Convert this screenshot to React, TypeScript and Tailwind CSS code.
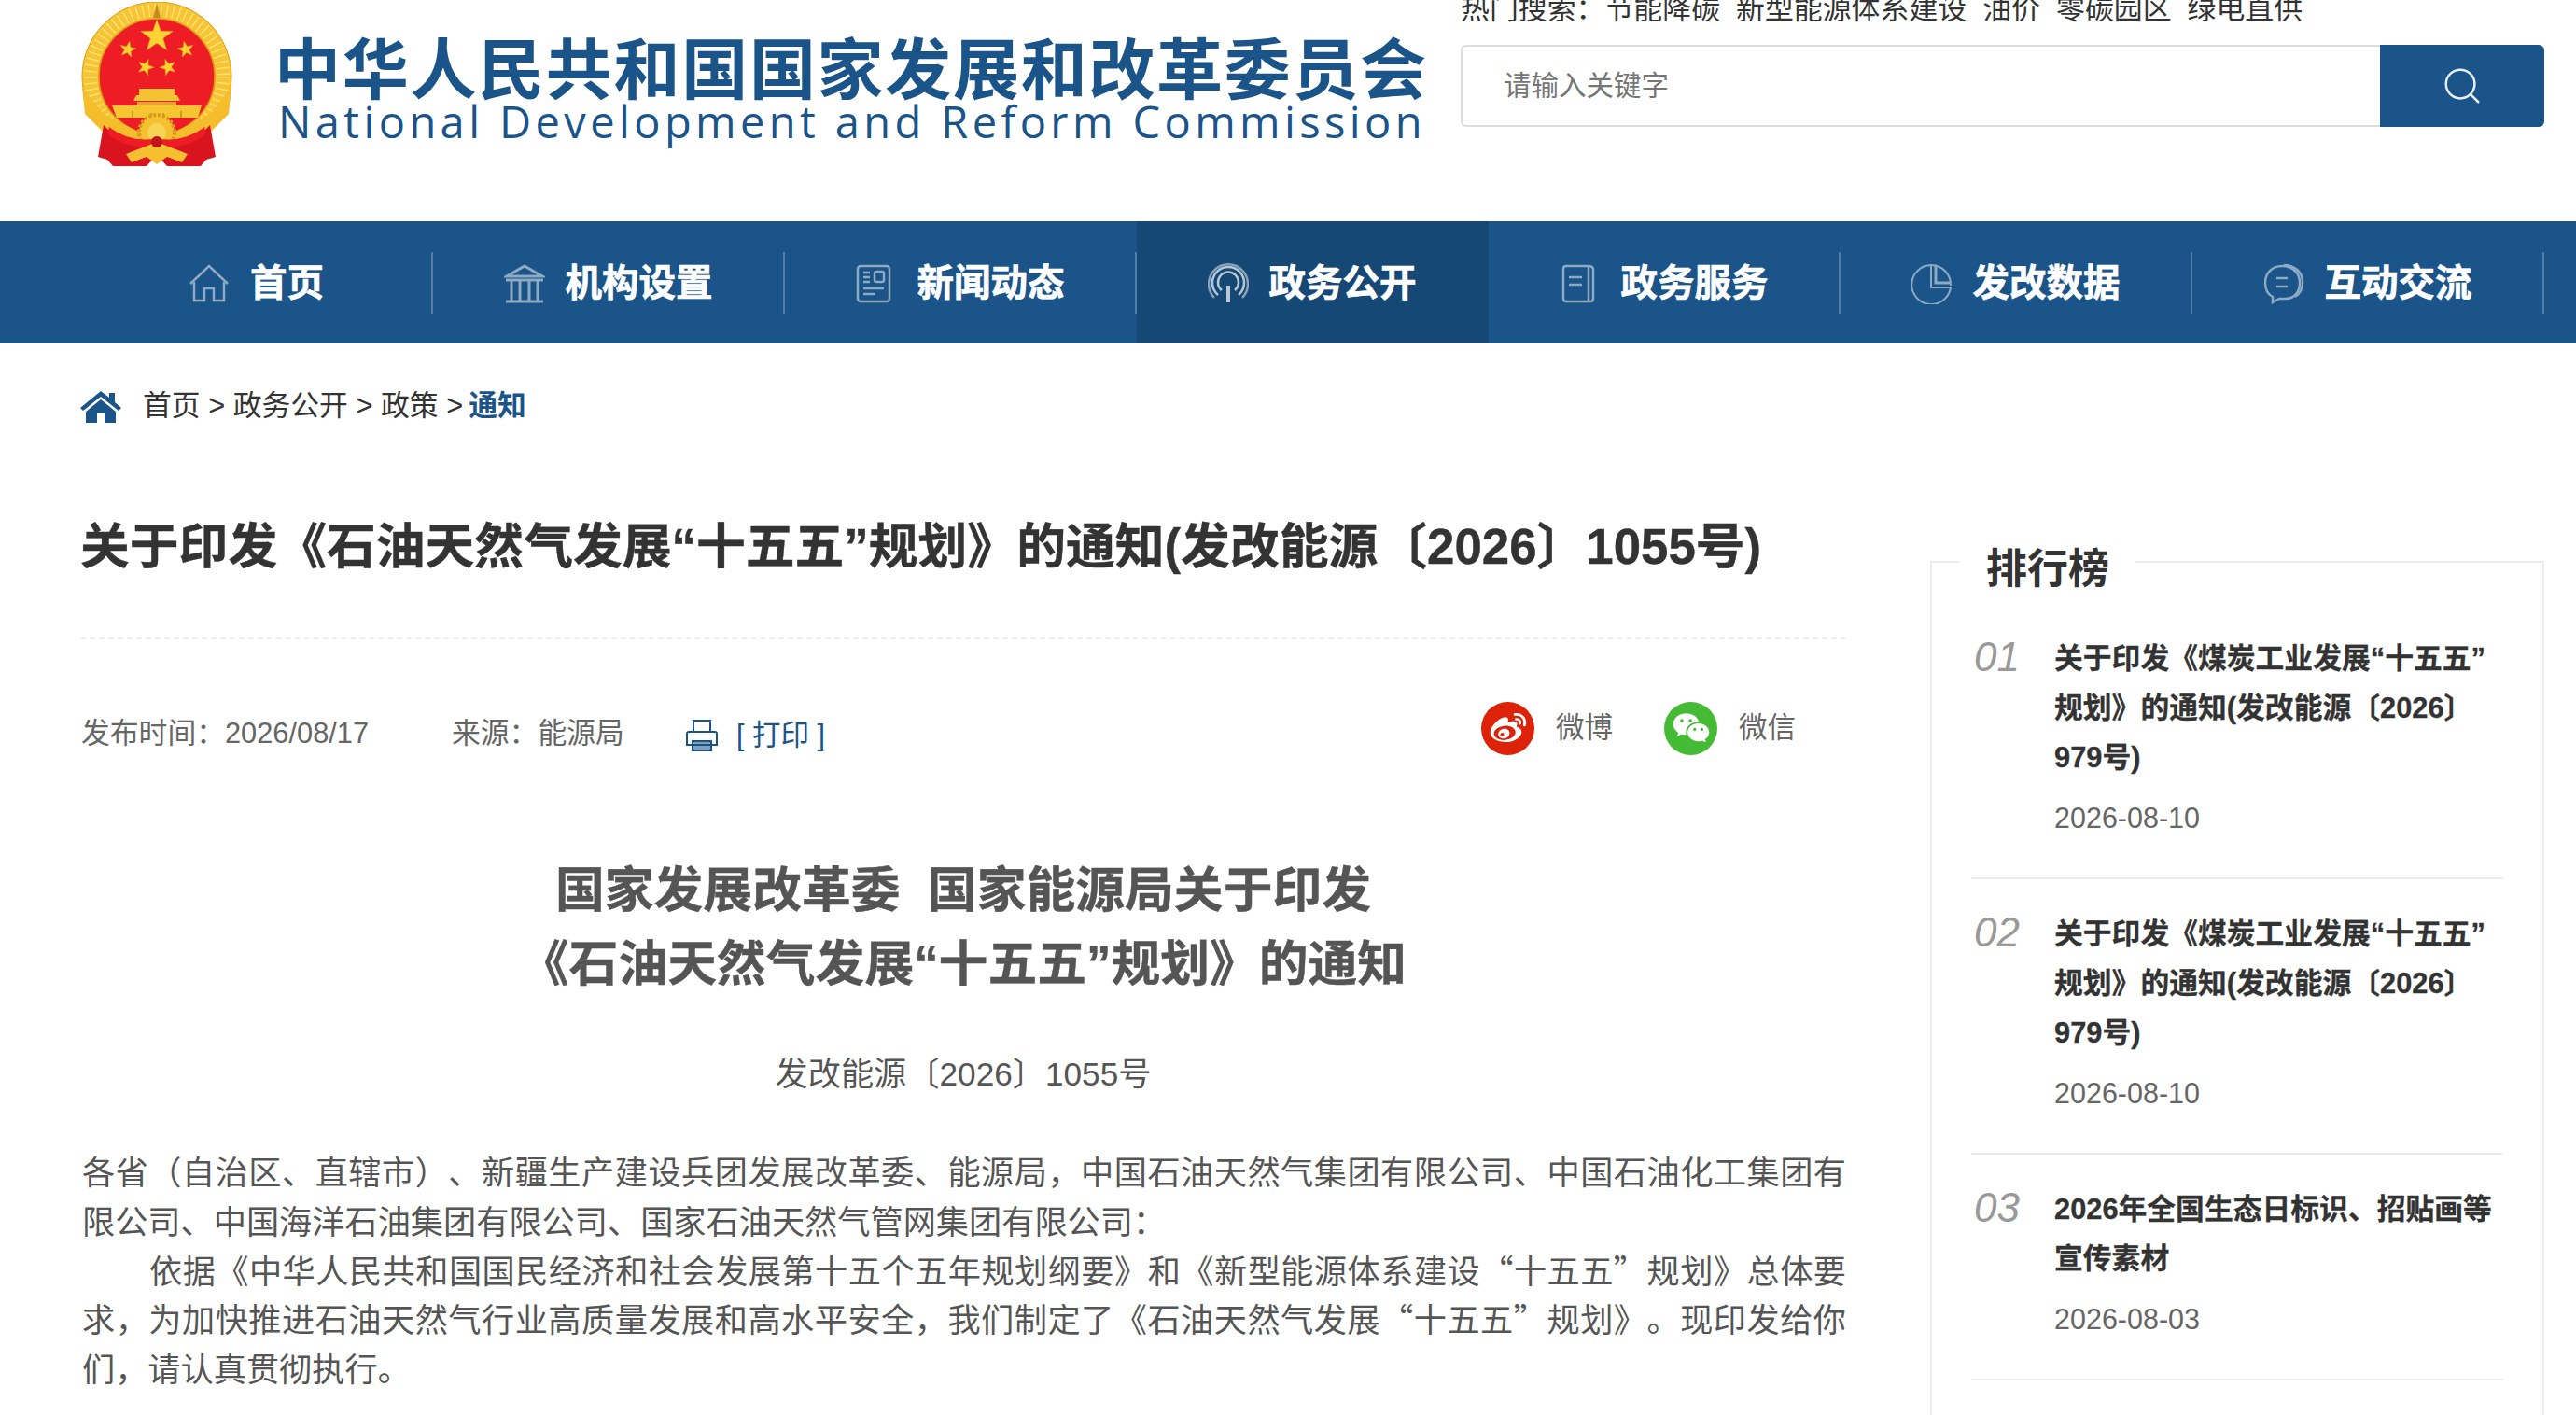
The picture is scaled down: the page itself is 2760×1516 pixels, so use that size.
import { Search } from "lucide-react";
import type { ReactNode } from "react";
import { RiWechatFill, RiWeiboFill } from "react-icons/ri";

const starPoints = (cx: number, cy: number, r: number, rot = 0) => {
  const pts: string[] = [];
  for (let i = 0; i < 10; i++) {
    const rad = i % 2 === 0 ? r : r * 0.4;
    const a = ((-90 + rot + i * 36) * Math.PI) / 180;
    pts.push(`${(cx + rad * Math.cos(a)).toFixed(1)},${(cy + rad * Math.sin(a)).toFixed(1)}`);
  }
  return pts.join(" ");
};

function Emblem() {
  const stars: [number, number, number, number][] = [
    [81, 37, 18, 0],
    [50, 51, 9, 12],
    [112, 51, 9, -12],
    [69, 70, 9, 20],
    [93, 70, 9, -20],
  ];
  return (
    <svg width="162" height="176" viewBox="0 0 162 176" className="shrink-0">
      <circle cx="81" cy="80" r="80" fill="#f7c531" stroke="#dd9b1c" strokeWidth="1" />
      <circle cx="81" cy="80" r="71" fill="none" stroke="#fde07a" strokeWidth="14" strokeDasharray="1.5 5" />
      <path d="M81 2 L77 17 H85 Z" fill="#c48a1c" />
      <circle cx="81" cy="80" r="62" fill="#ee1c25" stroke="#d9961d" strokeWidth="1.5" />
      {stars.map(([x, y, r, rot]) => (
        <polygon key={`${x}-${y}`} points={starPoints(x, y, r, rot)} fill="#fbd234" stroke="#e0a020" strokeWidth="0.6" />
      ))}
      <path d="M56 106 H106 L103 100 H100 V93 H62 V100 H59 Z" fill="#f4c233" />
      <path d="M60 107 H102 V111 H60 Z" fill="#e4a72a" />
      <path d="M33 111 H129 L125 124 H38 Z" fill="#f6c632" />
      <path d="M55 124 V117 M75 124 V119 M88 124 V119 M107 124 V117" stroke="#c98b1d" strokeWidth="1.5" />
      <path d="M1 92 L24 120 L62 140 H100 L138 120 L161 92 L158 120 L132 146 L100 162 H62 L30 146 L4 120 Z" fill="#f5bd2c" />
      <circle cx="81" cy="140" r="19" fill="#f4c030" stroke="#d79a20" strokeWidth="4" strokeDasharray="3 2" />
      <circle cx="81" cy="140" r="10" fill="#f8d454" />
      <path d="M24 132 C40 150 62 156 81 150 C100 156 122 150 138 132 L144 166 L134 169 L128 176 H92 L81 164 L70 176 H34 L28 169 L18 166 Z" fill="#d8141f" />
      <path d="M30 134 C46 146 64 150 81 146 C98 150 116 146 132 134 L134 141 C116 155 98 158 81 152 C64 158 46 155 28 141 Z" fill="#ee1c25" />
      <path d="M48 163 L81 150 L114 163 L108 172 L92 166 L81 174 L70 166 L54 172 Z" fill="#f4c030" />
      <circle cx="81" cy="150" r="6" fill="#c3141d" />
    </svg>
  );
}

const iconCls = "h-[44px] w-[44px] shrink-0 fill-none stroke-white";

const navItems: { label: string; active?: boolean; icon: ReactNode }[] = [
  {
    label: "首页",
    icon: (
      <svg viewBox="0 0 44 44" className={`${iconCls} opacity-50`} strokeWidth="2.5">
        <path d="M2 22 L22 3 L42 22 M6 20 V40 H17 V27 H27 V40 H38 V20" />
      </svg>
    ),
  },
  {
    label: "机构设置",
    icon: (
      <svg viewBox="0 0 44 44" className={`${iconCls} opacity-50`} strokeWidth="3">
        <path d="M22 3 L41 14 H3 Z" />
        <path d="M2 18 H42 M2 41 H42 M8 18 V40 M17 18 V40 M27 18 V40 M36 18 V40" />
      </svg>
    ),
  },
  {
    label: "新闻动态",
    icon: (
      <svg viewBox="0 0 44 44" className={`${iconCls} -translate-x-[3px] opacity-50`} strokeWidth="2.5">
        <rect x="5" y="3" width="34" height="38" rx="3" />
        <rect x="23" y="9" width="10" height="11" rx="2" />
        <path d="M11 10 H18 M11 15 H18 M11 20 H18 M11 27 H33 M11 33 H24" />
      </svg>
    ),
  },
  {
    label: "政务公开",
    active: true,
    icon: (
      <svg viewBox="0 0 44 44" className={`${iconCls} opacity-70`} strokeWidth="2.5">
        <path d="M22 24 V42" strokeWidth="4" />
        <path d="M15 29 A11 11 0 1 1 29 29" />
        <path d="M11 34 A17 17 0 1 1 33 34" />
        <path d="M7 37 A21 21 0 1 1 37 37" opacity="0.7" />
      </svg>
    ),
  },
  {
    label: "政务服务",
    icon: (
      <svg viewBox="0 0 44 44" className={`${iconCls} -translate-x-[2px] opacity-50`} strokeWidth="2.5">
        <path d="M6 6 Q6 3 9 3 H33 Q38 3 38 7 V38 Q38 41 35 41 H9 Q6 41 6 38 Z" />
        <path d="M33 3 V41 M12 15 H26 M12 23 H26" />
      </svg>
    ),
  },
  {
    label: "发改数据",
    icon: (
      <svg viewBox="0 0 44 44" className={`${iconCls} opacity-50`} strokeWidth="2">
        <path d="M21 2 A21 21 0 1 0 42 26 H21 Z" />
        <path d="M21 2 A21 21 0 0 1 42 24" />
        <path d="M26 2 V21 H42" strokeWidth="3" />
      </svg>
    ),
  },
  {
    label: "互动交流",
    icon: (
      <svg viewBox="0 0 44 44" className={`${iconCls} opacity-50`} strokeWidth="2.5">
        <path d="M20 3 C8 3 2 12 2 21 C2 29 6 34 10 36 L10 42 L17 38 H24 C34 38 39 30 39 21 C39 11 32 3 20 3 Z" />
        <path d="M22 2 C34 2 42 10 42 20 C42 28 39 33 34 36" />
        <path d="M14 16 H26 M14 25 H26" />
      </svg>
    ),
  },
];

const hotWords = ["节能降碳", "新型能源体系建设", "油价", "零碳园区", "绿电直供"];

const rankItems = [
  { no: "01", title: "关于印发《煤炭工业发展“十五五”\u200b规划》的通知(发改能源〔2026〕979号)", date: "2026-08-10" },
  { no: "02", title: "关于印发《煤炭工业发展“十五五”\u200b规划》的通知(发改能源〔2026〕979号)", date: "2026-08-10" },
  { no: "03", title: "2026年全国生态日标识、招贴画等宣传素材", date: "2026-08-03" },
];

export default function App() {
  return (
    <div className="h-[1516px] w-[2760px] overflow-hidden bg-white font-['Liberation_Sans','Noto_Sans_CJK_SC',sans-serif] text-[#333]">
      <header className="flex h-[237px] overflow-hidden pl-[87px] pr-[33px]">
        <div className="mt-[2px]">
          <Emblem />
        </div>
        <div className="ml-[45px] mt-[35px] w-[1252px] text-[#1a5488]">
          <div className="h-[71px] whitespace-nowrap text-[71px] font-bold leading-[68px] tracking-[1.7px] font-['Noto_Sans_CJK_SC',sans-serif]">
            中华人民共和国国家发展和改革委员会
          </div>
          <div className="whitespace-nowrap pl-[4px] text-[47px] leading-[48px] tracking-[4.4px] font-['Open_Sans',sans-serif]">
            National Development and Reform Commission
          </div>
        </div>
        <div className="ml-[19px] w-[1161px]">
          <div className="-mt-[6px] flex h-[31px] whitespace-nowrap text-[30.9px] leading-[31px] text-[#333]">
            <span>热门搜索：</span>
            {hotWords.map((w, i) => (
              <span key={w} className={i === 0 ? "" : "ml-[17px]"}>
                {w}
              </span>
            ))}
          </div>
          <div className="mt-[23px] flex h-[88px]">
            <div className="flex flex-1 items-center rounded-l-[6px] border-2 border-r-0 border-[#dddddd] pl-[44px] text-[29.5px] text-[#757575]">
              请输入关键字
            </div>
            <div className="flex w-[176px] items-center justify-center rounded-r-[6px] bg-[#1a5488]">
              <Search size={46} strokeWidth={1.3} className="text-[#e6edf3]" />
            </div>
          </div>
        </div>
      </header>

      <nav className="flex h-[131px] bg-[#1a5488] pl-[87px]">
        {navItems.map((item) => (
          <div key={item.label} className={`flex h-full w-[377px] items-center ${item.active ? "bg-[#164876]" : ""}`}>
            <div className="mt-[3px] flex flex-1 items-center justify-center gap-[22px]">
              {item.icon}
              <span className="text-[39.5px] font-bold leading-none text-white [-webkit-text-stroke:0.7px_white]">{item.label}</span>
            </div>
            {item.active ? <div className="h-[66px] w-[2px]" /> : <div className="h-[66px] w-[2px] bg-white/25" />}
          </div>
        ))}
      </nav>

      <div className="flex h-[134px] items-center pl-[86px] text-[30.8px]">
        <svg viewBox="0 0 44 36" className="mr-[23px] h-[36px] w-[44px] fill-[#1a5488]">
          <path d="M22 2 L31 9 V4 H37 V14 L44 20 L41 23 L22 8 L3 23 L0 20 Z" />
          <path d="M22 11 L38 24 V36 H26 V26 H18 V36 H6 V24 Z" />
        </svg>
        <span>首页 &gt; 政务公开 &gt; 政策 &gt; </span>
        <span className="ml-[6px] font-bold text-[#1a5488]">通知</span>
      </div>

      <div className="flex pl-[86px]">
        <main className="w-[1892px]">
          <h1 className="h-[183px] whitespace-nowrap border-b-2 border-dashed border-[#eeeeee] pt-[34px] text-[52.8px] font-bold leading-[100px] text-[#333] [-webkit-text-stroke:0.4px_#333]">
            关于印发《石油天然气发展“十五五”规划》的通知(发改能源〔2026〕1055号)
          </h1>

          <div className="flex h-[200px] items-center pl-[1px] pr-[54px] text-[30.8px] text-[#666]">
            <span className="mt-[2px] w-[397px]">发布时间：2026/08/17</span>
            <span className="mt-[2px] w-[249px]">来源：能源局</span>
            <span className="ml-[1px] mt-[6px] flex items-center gap-[19px] text-[30.5px] text-[#1a5488]">
              <svg viewBox="0 0 36 36" className="h-[36px] w-[36px] fill-none stroke-[#1a5488]" strokeWidth="2">
                <path d="M9 14 V2 H27 V14" />
                <path d="M4 14 H32 Q34 14 34 16 V28 H2 V16 Q2 14 4 14 Z" />
                <path d="M8 24 H28 V34 H8 Z" fill="#1a5488" fillOpacity="0.55" />
              </svg>
              <span>[ 打印 ]</span>
            </span>
            <div className="-mt-[10px] ml-auto flex items-center text-[30.5px]">
              <span className="flex h-[57px] w-[57px] items-center justify-center rounded-full bg-[#dc2208]">
                <RiWeiboFill size={42} className="text-white" />
              </span>
              <span className="ml-[23px]">微博</span>
              <span className="ml-[55px] flex h-[57px] w-[57px] items-center justify-center rounded-full bg-[#45bb35]">
                <RiWechatFill size={42} className="text-white" />
              </span>
              <span className="ml-[23px]">微信</span>
            </div>
          </div>

          <h2 className="mt-[29px] text-center text-[52.8px] font-bold leading-[79px] text-[#555] [-webkit-text-stroke:0.4px_#555]">
            <div>国家发展改革委&nbsp;&nbsp;国家能源局关于印发</div>
            <div>《石油天然气发展“十五五”规划》的通知</div>
          </h2>
          <div className="mt-[52px] text-center text-[35.2px] leading-[53px] text-[#555]">发改能源〔2026〕1055号</div>

          <div className="mt-[51px] pl-[2px] text-justify text-[35.2px] leading-[52.8px] text-[#555] [text-spacing-trim:space-all] font-['Noto_Sans_CJK_SC',serif]">
            <p>各省（自治区、直辖市）、新疆生产建设兵团发展改革委、能源局，中国石油天然气集团有限公司、中国石油化工集团有限公司、中国海洋石油集团有限公司、国家石油天然气管网集团有限公司：</p>
            <p className="indent-[72px]">依据《中华人民共和国国民经济和社会发展第十五个五年规划纲要》和《新型能源体系建设“十五五”规划》总体要求，为加快推进石油天然气行业高质量发展和高水平安全，我们制定了《石油天然气发展“十五五”规划》。现印发给你们，请认真贯彻执行。</p>
          </div>
        </main>

        <aside className="ml-[90px] mt-[99px] h-[1000px] w-[658px] border-2 border-[#ebebf0]">
          <div className="-mt-[23px] ml-[30px] w-fit bg-white px-[28px] text-[44px] font-bold leading-[60px] text-[#333]">排行榜</div>
          <ul className="mt-[7px] px-[42px]">
            {rankItems.map((item) => (
              <li key={item.no} className="flex border-b-2 border-[#ebebf0] pb-[44px] pt-[32px]">
                <span className="w-[89px] shrink-0 pl-[3px] text-[44px] italic leading-[49px] text-[#999]">{item.no}</span>
                <div className="min-w-0 flex-1">
                  <div className="text-[30.8px] font-bold leading-[53px] text-[#333] [-webkit-text-stroke:0.3px_#333]">{item.title}</div>
                  <div className="mt-[18px] text-[30.5px] leading-[40px] text-[#666]">{item.date}</div>
                </div>
              </li>
            ))}
          </ul>
        </aside>
      </div>
    </div>
  );
}
